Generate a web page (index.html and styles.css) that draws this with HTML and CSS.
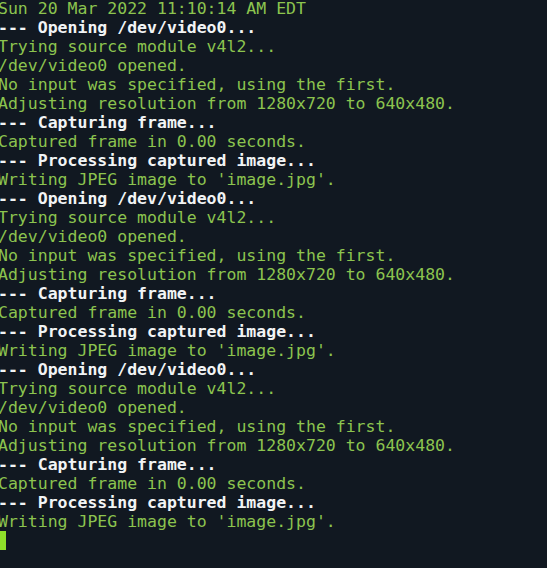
FILE: index.html
```html
<!DOCTYPE html>
<html>
<head>
<meta charset="utf-8">
<link rel="stylesheet" href="styles.css">
</head>
<body>
<div class="term">
<div class="line">Sun 20 Mar 2022 11:10:14 AM EDT</div>
<div class="line hd">--- Opening /dev/video0...</div>
<div class="line">Trying source module v4l2...</div>
<div class="line">/dev/video0 opened.</div>
<div class="line">No input was specified, using the first.</div>
<div class="line">Adjusting resolution from 1280x720 to 640x480.</div>
<div class="line hd">--- Capturing frame...</div>
<div class="line">Captured frame in 0.00 seconds.</div>
<div class="line hd">--- Processing captured image...</div>
<div class="line">Writing JPEG image to 'image.jpg'.</div>
<div class="line hd">--- Opening /dev/video0...</div>
<div class="line">Trying source module v4l2...</div>
<div class="line">/dev/video0 opened.</div>
<div class="line">No input was specified, using the first.</div>
<div class="line">Adjusting resolution from 1280x720 to 640x480.</div>
<div class="line hd">--- Capturing frame...</div>
<div class="line">Captured frame in 0.00 seconds.</div>
<div class="line hd">--- Processing captured image...</div>
<div class="line">Writing JPEG image to 'image.jpg'.</div>
<div class="line hd">--- Opening /dev/video0...</div>
<div class="line">Trying source module v4l2...</div>
<div class="line">/dev/video0 opened.</div>
<div class="line">No input was specified, using the first.</div>
<div class="line">Adjusting resolution from 1280x720 to 640x480.</div>
<div class="line hd">--- Capturing frame...</div>
<div class="line">Captured frame in 0.00 seconds.</div>
<div class="line hd">--- Processing captured image...</div>
<div class="line">Writing JPEG image to 'image.jpg'.</div>
<div class="line"><span class="cursor"></span></div>
</div>
</body>
</html>
```

FILE: styles.css
```css
html, body {
  margin: 0;
  padding: 0;
  background: #111821;
  height: 100%;
  overflow: hidden;
}
.term {
  margin: -1px 0 0 -2px;
  font-family: "DejaVu Sans Mono", monospace;
  font-size: 16.5px;
  line-height: 19px;
  color: #8cc44f;
}
.line {
  height: 19px;
  white-space: pre;
}
.hd {
  color: #f2f4f5;
  font-weight: bold;
}
.cursor {
  display: inline-block;
  width: 8px;
  height: 19px;
  background: #8fe02a;
  vertical-align: top;
}
```
